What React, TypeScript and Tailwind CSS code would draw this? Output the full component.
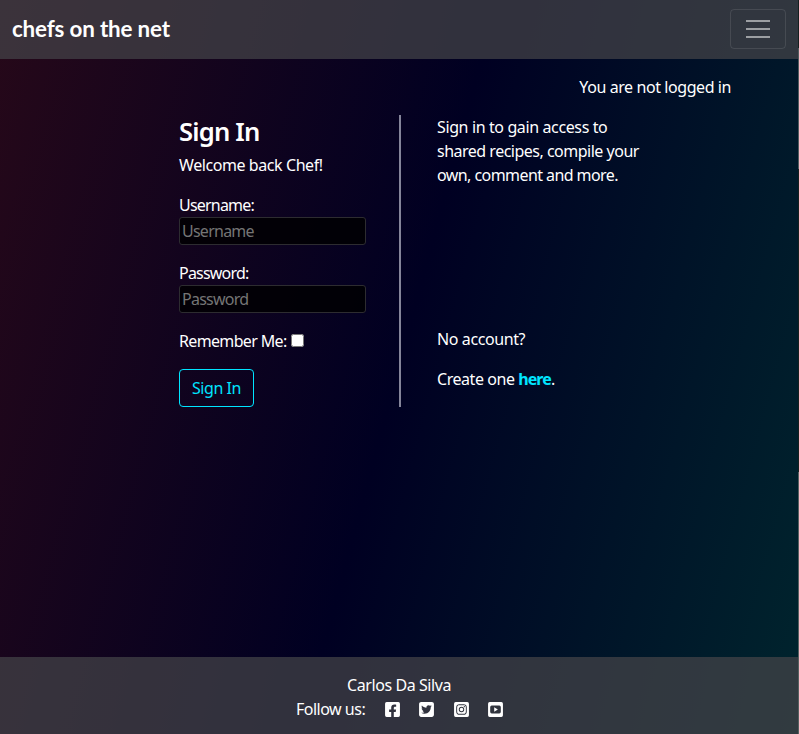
import { FaFacebookSquare, FaInstagramSquare } from "react-icons/fa";
import { FaSquareTwitter } from "react-icons/fa6";

function YoutubeSquare() {
  return (
    <svg viewBox="0 0 448 512" className="h-[17px] w-[15px]" fill="currentColor" aria-hidden="true">
      <path fillRule="evenodd" d="M48 32h352q48 0 48 48v352q0 48-48 48H48q-48 0-48-48V80q0-48 48-48zM110 136q-46 0-46 50v140q0 50 46 50h228q46 0 46-50V186q0-50-46-50zM185 190l110 66-110 66z" />
    </svg>
  );
}

const field =
  "block h-7 w-[187px] rounded-[3px] border border-[#2d2c30] bg-black/80 px-[2px] text-base leading-6 tracking-[-0.75px] text-white outline-none placeholder:text-[#757575]";

export default function App() {
  return (
    <div className="flex h-[734px] w-full overflow-hidden">
      <div className="flex min-w-0 flex-1 flex-col bg-[linear-gradient(105deg,#260819_0%,#000022_50%,#00292f_106%)] text-base leading-6 tracking-[-0.42px] text-white font-['Noto_Sans',sans-serif]">
        <header className="flex h-[59px] shrink-0 items-center justify-between bg-[#444448]/72 px-3 pb-[2px]">
          <a className="font-['Lato',sans-serif] text-[22.4px] leading-8 font-bold tracking-[-0.17px]">chefs on the net</a>
          <button className="flex h-10 w-14 items-center justify-center rounded-[4px] border border-white/10" aria-label="Menu">
            <span className="flex w-6 flex-col gap-[6px]">
              <span className="h-[2px] bg-[#9c9fa3]" />
              <span className="h-[2px] bg-[#9c9fa3]" />
              <span className="h-[2px] bg-[#9c9fa3]" />
            </span>
          </button>
        </header>
        <main className="flex-1 pt-4">
          <p className="pr-[67px] text-right">You are not logged in</p>
          <div className="mt-4 flex h-[292px] pl-[179px]">
            <section className="w-[220px]">
              <h1 className="pt-px text-[25.6px] leading-8 font-semibold tracking-[-0.8px]">Sign In</h1>
              <p className="mt-[5px]">Welcome back Chef!</p>
              <label className="mt-4 block h-6 tracking-[-0.8px]">Username:</label>
              <input className={field} placeholder="Username" />
              <label className="mt-4 block h-6 tracking-[-0.8px]">Password:</label>
              <input className={field} type="password" placeholder="Password" />
              <label className="mt-4 flex h-6 items-center gap-1 tracking-[-0.65px]">
                Remember Me:
                <input type="checkbox" className="mt-[-2px] h-[13px] w-[13px]" />
              </label>
              <button className="mt-4 h-[38px] w-[75px] rounded-[4px] border border-[#00e5ff] text-[#00e5ff]">Sign In</button>
            </section>
            <section className="w-[260px] border-l-2 border-[#85859a] pl-9">
              <p className="whitespace-nowrap">
                <span className="tracking-[-0.38px]">Sign in to gain access to</span><br />
                <span className="tracking-[-0.5px]">shared recipes, compile your</span><br />
                <span className="tracking-[-0.57px]">own, comment and more.</span>
              </p>
              <p className="mt-[140px] tracking-[-0.4px]">No account?</p>
              <p className="mt-4 tracking-[-0.45px]">Create one <a className="font-bold tracking-[-0.9px] text-[#00e5ff]">here</a>.</p>
            </section>
          </div>
        </main>
        <footer className="h-[77px] shrink-0 bg-[#444448]/72 pt-4">
          <p className="text-center">Carlos Da Silva</p>
          <div className="flex items-center pl-[296px]">
            <span className="w-[89px] tracking-[-0.5px]">Follow us:</span>
            <div className="flex gap-[19.300px]">
              <FaFacebookSquare className="h-[17px] w-[15px]" />
              <FaSquareTwitter className="h-[17px] w-[15px]" />
              <FaInstagramSquare className="h-[17px] w-[15px]" />
              <YoutubeSquare />
            </div>
          </div>
        </footer>
      </div>
      <div className="flex w-px shrink-0 flex-col bg-[#16201f]">
        <span className="mt-12 h-[121px] bg-[#515b5e]" />
        <span className="mt-[303px] flex-1 bg-[#566060]" />
      </div>
    </div>
  );
}
